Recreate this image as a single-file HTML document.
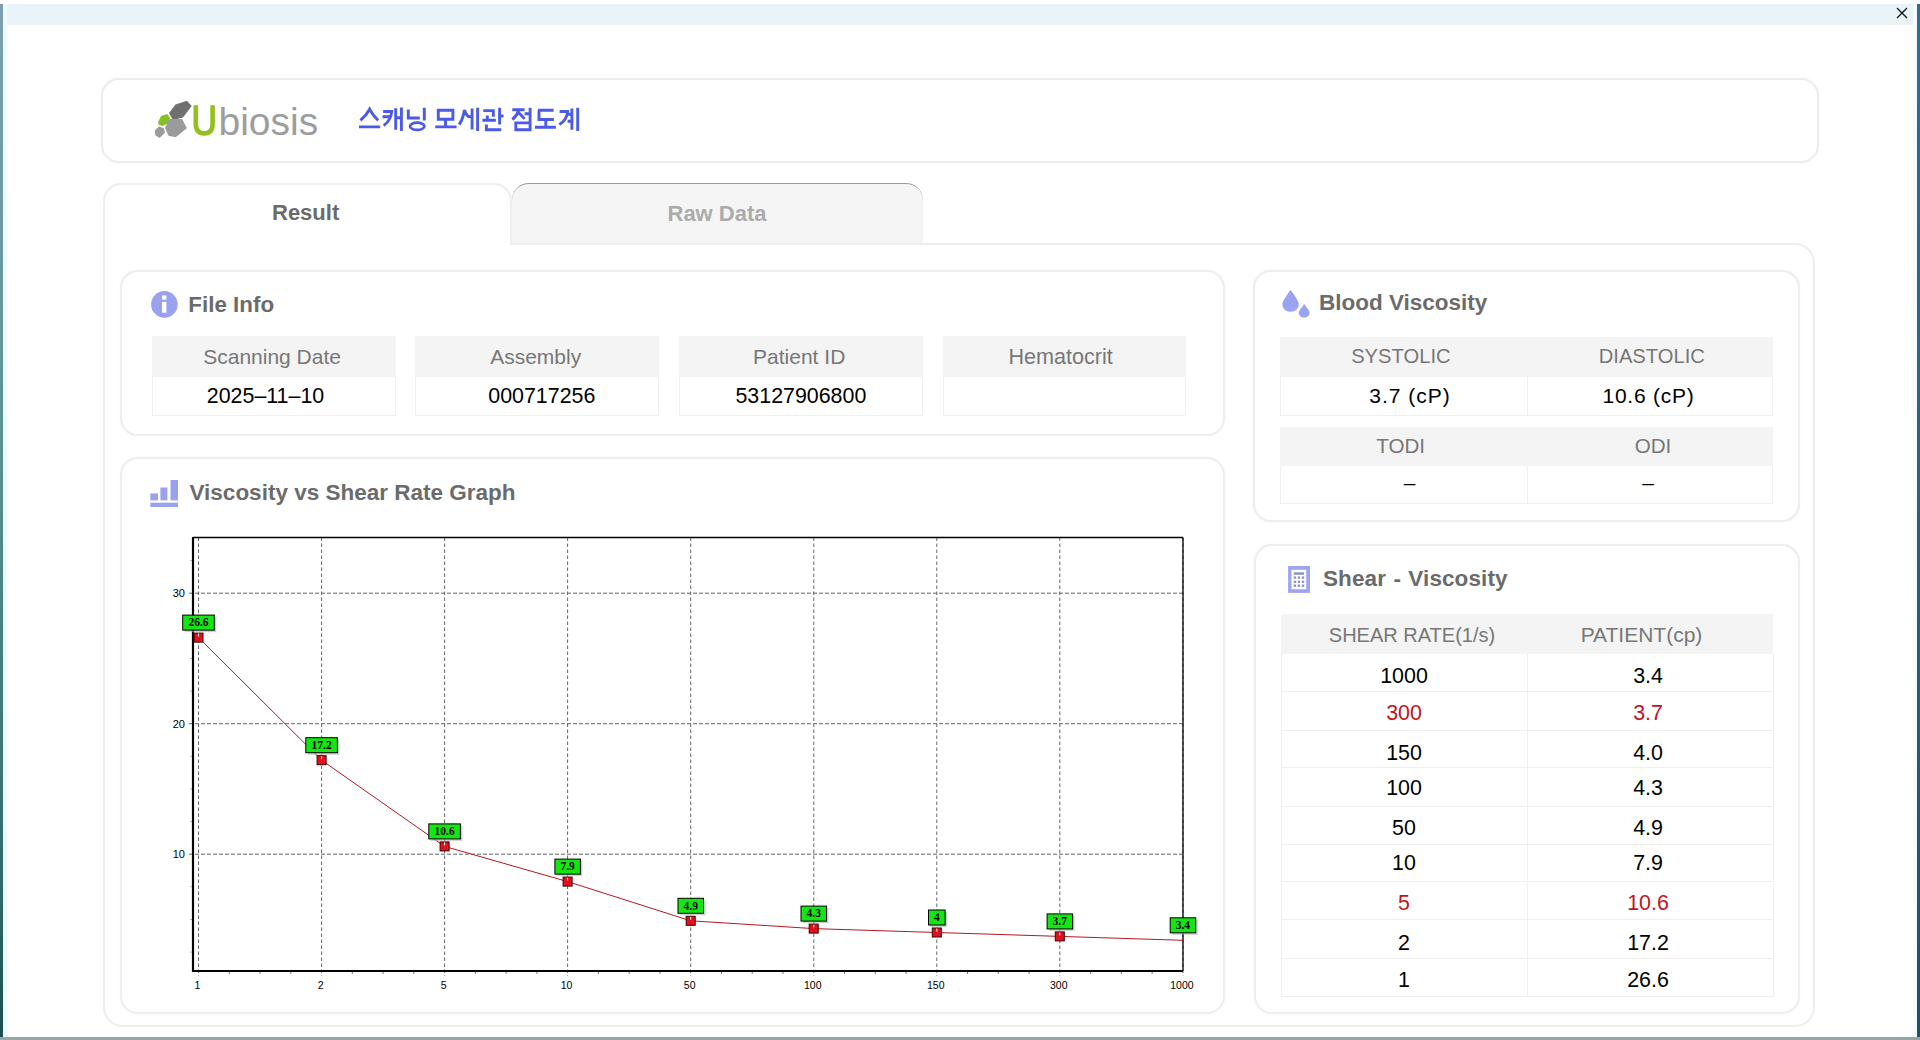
<!DOCTYPE html>
<html><head><meta charset="utf-8">
<style>
html,body{margin:0;padding:0;}
body{width:1920px;height:1040px;overflow:hidden;position:relative;background:#fff;font-family:"Liberation Sans",sans-serif;}
.t{position:absolute;white-space:nowrap;}
.r{position:absolute;box-sizing:border-box;}
svg{position:absolute;}
</style></head><body>

<div class="r" style="left:0.0px;top:4.0px;width:3.0px;height:1033.0px;background:linear-gradient(#7d9fb5,#5e9396 40%,#2f6b6b 85%,#1d4f52);"></div>
<div class="r" style="left:3.0px;top:4.0px;width:4.0px;height:1033.0px;background:#eefbfc;"></div>
<div class="r" style="left:1917.0px;top:4.0px;width:3.0px;height:1033.0px;background:linear-gradient(#2c6f93,#2b5f86 50%,#1d4f6f);"></div>
<div class="r" style="left:1913.0px;top:4.0px;width:4.0px;height:1033.0px;background:#f6fbfd;"></div>
<div class="r" style="left:0.0px;top:1037.0px;width:1920.0px;height:3.0px;background:#93a6a8;"></div>
<div class="r" style="left:7.0px;top:4.0px;width:1906.0px;height:21.0px;background:linear-gradient(#e6f4fa,#ecf3f8);"></div>
<svg style="left:1894px;top:5px" width="16" height="16" viewBox="0 0 16 16"><path d="M3 3 L13 13 M13 3 L3 13" stroke="#111" stroke-width="1.3" fill="none"/></svg>
<div class="r" style="left:101.0px;top:78.0px;width:1717.5px;height:84.5px;border:2px solid #ededed;border-radius:18px;background:#fff;box-shadow:0 0 3px rgba(0,0,0,0.04);"></div>
<svg style="left:0;top:0" width="340" height="160" viewBox="0 0 340 160">
<polygon points="169.0,113.1 175.5,104.5 186.9,100.7 191.7,106.0 183.0,117.4 172.9,120.0" fill="#707070"/>
<polygon points="158.1,122.1 161.2,116.1 167.2,114.0 169.9,117.8 168.3,123.2 162.4,125.9 158.6,124.8" fill="#82c11e"/>
<polygon points="164.9,127.7 169.7,119.1 182.1,119.1 186.9,128.2 175.6,137.3 168.5,135.7" fill="#9b9b9b"/>
<polygon points="154.8,130.4 159.0,126.6 164.0,128.3 165.0,132.6 159.6,138.0 155.3,135.3" fill="#9b9b9b"/>
<path d="M195.8,105.3 V124 Q195.8,133.4 204.2,133.4 Q212.6,133.4 212.6,124 V105.3" stroke="#93c01f" stroke-width="4.6" fill="none"/>
</svg>
<div class="t" style="left:218.5px;top:102.0px;font-size:39px;line-height:39px;color:#9d9d9d;font-weight:normal;font-family:'Liberation Sans', sans-serif;">biosis</div>
<svg style="left:0;top:0" width="600" height="140" viewBox="0 0 600 140"><path d="M360.4,120.3 Q366,116 369.6,109.2 Q373,116 378.2,120.3 M359,126.9 H380.2 M383.1,111.5 H391.7 Q391,120 383.7,125.6 M382.5,116.8 H391.1 M395.7,108.3 V129.8 M395.7,117.8 H401.4 M401.4,107.4 V131 M408.3,109.5 V118 H419.8 M424.3,107.7 V120.6 M438.3,110.3 H452.9 V119.2 H438.3 Z M445.5,119.2 V126.9 M435.2,126.9 H456.6 M459.2,124.6 Q463.5,118 464.4,110 Q466,115 469,117.4 M467.8,116.6 H472.1 M472.1,108.6 V129.5 M477.6,107.7 V131 M483.3,110.6 H493.3 V116.8 M487.3,115.5 V120 M482.4,120.3 H495.9 M499.6,107.7 V124.6 M499.6,116 H503.6 M486.4,124.4 V129.8 H501.3 M512.3,109.8 H524.6 M518.9,110 Q517,116 512.3,119.5 M519,113 Q522,116 524.6,118.9 M524.6,113.8 H529.8 M530.1,107.7 V122.6 M515.8,122.9 H530.1 V129.8 H515.8 Z M538.1,110.3 H553.6 M539,110.3 V119.5 H553.9 M545.8,119.5 V126.9 M535,127.2 H555.9 M559.6,111.5 H567.6 Q567,120 559.3,124.6 M567.6,114.3 H571.9 M567.6,121.2 H571.9 M571.9,108.6 V129.8 M577.7,107.7 V131" stroke="#4b5be8" stroke-width="2.9" fill="none" stroke-linejoin="miter"/><ellipse cx="417.2" cy="126.3" rx="7.2" ry="3.6" stroke="#4b5be8" stroke-width="2.7" fill="none"/></svg>
<div class="r" style="left:103.0px;top:243.0px;width:1712.0px;height:784.0px;border:2px solid #eeeeee;border-radius:0 20px 20px 20px;background:#fff;"></div>
<div class="r" style="left:103.0px;top:182.5px;width:409.0px;height:62.5px;border:2px solid #eeeeee;border-bottom:none;border-radius:18px 18px 0 0;background:#fff;"></div>
<div class="r" style="left:511.5px;top:182.8px;width:411.0px;height:60.7px;border-top:1px solid #9a9a9a;border-radius:17px 17px 0 0;background:#f5f5f5;"></div>
<div class="t" style="left:272.0px;top:201.8px;font-size:22px;line-height:22px;color:#6b6b6b;font-weight:bold;font-family:'Liberation Sans', sans-serif;">Result</div>
<div class="t" style="left:667.5px;top:202.8px;font-size:22px;line-height:22px;color:#ababab;font-weight:bold;font-family:'Liberation Sans', sans-serif;">Raw Data</div>
<div class="r" style="left:119.5px;top:270.0px;width:1105.0px;height:165.5px;border:2px solid #eeeeee;border-radius:18px;background:#fff;box-shadow:0 0 3px rgba(0,0,0,0.04);"></div>
<svg style="left:150px;top:290px" width="30" height="30" viewBox="0 0 30 30">
<circle cx="14.4" cy="14.4" r="13.3" fill="#9aa2f0"/>
<rect x="12" y="5.4" width="4.4" height="4.2" fill="#fff"/>
<rect x="12" y="11.9" width="4.4" height="10.8" fill="#fff"/>
</svg>
<div class="t" style="left:188.3px;top:293.9px;font-size:22.4px;line-height:22.4px;color:#6b6b6b;font-weight:bold;font-family:'Liberation Sans', sans-serif;">File Info</div>
<div class="r" style="left:151.5px;top:336.2px;width:244.3px;height:41.2px;background:#f4f4f4;"></div>
<div class="r" style="left:151.5px;top:377.4px;width:244.3px;height:39.1px;border:1px solid #f0f0f0;border-top:none;background:#fff;"></div>
<div class="t" style="left:122.1px;width:300px;text-align:center;top:346.2px;font-size:21px;line-height:21px;color:#777;font-weight:normal;font-family:'Liberation Sans', sans-serif;">Scanning Date</div>
<div class="t" style="left:115.5px;width:300px;text-align:center;top:385.7px;font-size:21.4px;line-height:21.4px;color:#000;font-weight:normal;font-family:'Liberation Sans', sans-serif;">2025&ndash;11&ndash;10</div>
<div class="r" style="left:415.2px;top:336.2px;width:244.0px;height:41.2px;background:#f4f4f4;"></div>
<div class="r" style="left:415.2px;top:377.4px;width:244.0px;height:39.1px;border:1px solid #f0f0f0;border-top:none;background:#fff;"></div>
<div class="t" style="left:385.7px;width:300px;text-align:center;top:346.2px;font-size:21px;line-height:21px;color:#777;font-weight:normal;font-family:'Liberation Sans', sans-serif;">Assembly</div>
<div class="t" style="left:391.8px;width:300px;text-align:center;top:385.7px;font-size:21.4px;line-height:21.4px;color:#000;font-weight:normal;font-family:'Liberation Sans', sans-serif;">000717256</div>
<div class="r" style="left:678.7px;top:336.2px;width:244.1px;height:41.2px;background:#f4f4f4;"></div>
<div class="r" style="left:678.7px;top:377.4px;width:244.1px;height:39.1px;border:1px solid #f0f0f0;border-top:none;background:#fff;"></div>
<div class="t" style="left:649.2px;width:300px;text-align:center;top:346.2px;font-size:21px;line-height:21px;color:#777;font-weight:normal;font-family:'Liberation Sans', sans-serif;">Patient ID</div>
<div class="t" style="left:650.9px;width:300px;text-align:center;top:385.7px;font-size:21.4px;line-height:21.4px;color:#000;font-weight:normal;font-family:'Liberation Sans', sans-serif;">53127906800</div>
<div class="r" style="left:942.5px;top:336.2px;width:243.2px;height:41.2px;background:#f4f4f4;"></div>
<div class="r" style="left:942.5px;top:377.4px;width:243.2px;height:39.1px;border:1px solid #f0f0f0;border-top:none;background:#fff;"></div>
<div class="t" style="left:910.6px;width:300px;text-align:center;top:345.7px;font-size:21.6px;line-height:21.6px;color:#777;font-weight:normal;font-family:'Liberation Sans', sans-serif;">Hematocrit</div>
<div class="r" style="left:119.5px;top:457.0px;width:1105.0px;height:557.0px;border:2px solid #eeeeee;border-radius:18px;background:#fff;box-shadow:0 0 3px rgba(0,0,0,0.04);"></div>
<svg style="left:148px;top:478px" width="34" height="32" viewBox="0 0 34 32">
<rect x="2.3" y="15.4" width="7.7" height="7" fill="#9aa2f0"/>
<rect x="12.4" y="9.5" width="7" height="12.9" fill="#9aa2f0"/>
<rect x="22.5" y="2" width="7.5" height="20.4" fill="#9aa2f0"/>
<rect x="2.3" y="24.7" width="27.7" height="4.3" fill="#9aa2f0"/>
</svg>
<div class="t" style="left:189.5px;top:482.1px;font-size:22.5px;line-height:22.5px;color:#6b6b6b;font-weight:bold;font-family:'Liberation Sans', sans-serif;">Viscosity vs Shear Rate Graph</div>
<svg style="left:0;top:0" width="1920" height="1040" viewBox="0 0 1920 1040">
<line x1="198.5" y1="537.5" x2="198.5" y2="976" stroke="#666" stroke-width="1" stroke-dasharray="3.5,2.5"/>
<line x1="321.6" y1="537.5" x2="321.6" y2="976" stroke="#666" stroke-width="1" stroke-dasharray="3.5,2.5"/>
<line x1="444.6" y1="537.5" x2="444.6" y2="976" stroke="#666" stroke-width="1" stroke-dasharray="3.5,2.5"/>
<line x1="567.6" y1="537.5" x2="567.6" y2="976" stroke="#666" stroke-width="1" stroke-dasharray="3.5,2.5"/>
<line x1="690.7" y1="537.5" x2="690.7" y2="976" stroke="#666" stroke-width="1" stroke-dasharray="3.5,2.5"/>
<line x1="813.8" y1="537.5" x2="813.8" y2="976" stroke="#666" stroke-width="1" stroke-dasharray="3.5,2.5"/>
<line x1="936.8" y1="537.5" x2="936.8" y2="976" stroke="#666" stroke-width="1" stroke-dasharray="3.5,2.5"/>
<line x1="1059.8" y1="537.5" x2="1059.8" y2="976" stroke="#666" stroke-width="1" stroke-dasharray="3.5,2.5"/>
<line x1="1182.9" y1="537.5" x2="1182.9" y2="976" stroke="#666" stroke-width="1" stroke-dasharray="3.5,2.5"/>
<line x1="189" y1="854.2" x2="1183" y2="854.2" stroke="#666" stroke-width="1" stroke-dasharray="4,2"/>
<text x="185" y="858.2" font-family="Liberation Sans" font-size="11" text-anchor="end" fill="#000">10</text>
<line x1="189" y1="723.7" x2="1183" y2="723.7" stroke="#666" stroke-width="1" stroke-dasharray="4,2"/>
<text x="185" y="727.7" font-family="Liberation Sans" font-size="11" text-anchor="end" fill="#000">20</text>
<line x1="189" y1="593.2" x2="1183" y2="593.2" stroke="#666" stroke-width="1" stroke-dasharray="4,2"/>
<text x="185" y="597.2" font-family="Liberation Sans" font-size="11" text-anchor="end" fill="#000">30</text>
<line x1="190" y1="952.1" x2="193" y2="952.1" stroke="#bbb" stroke-width="1"/>
<line x1="190" y1="919.5" x2="193" y2="919.5" stroke="#bbb" stroke-width="1"/>
<line x1="190" y1="886.8" x2="193" y2="886.8" stroke="#bbb" stroke-width="1"/>
<line x1="190" y1="821.6" x2="193" y2="821.6" stroke="#bbb" stroke-width="1"/>
<line x1="190" y1="789.0" x2="193" y2="789.0" stroke="#bbb" stroke-width="1"/>
<line x1="190" y1="756.3" x2="193" y2="756.3" stroke="#bbb" stroke-width="1"/>
<line x1="190" y1="691.1" x2="193" y2="691.1" stroke="#bbb" stroke-width="1"/>
<line x1="190" y1="658.5" x2="193" y2="658.5" stroke="#bbb" stroke-width="1"/>
<line x1="190" y1="625.8" x2="193" y2="625.8" stroke="#bbb" stroke-width="1"/>
<line x1="190" y1="560.6" x2="193" y2="560.6" stroke="#bbb" stroke-width="1"/>
<line x1="229.3" y1="971" x2="229.3" y2="974" stroke="#777" stroke-width="1"/>
<line x1="260.0" y1="971" x2="260.0" y2="974" stroke="#777" stroke-width="1"/>
<line x1="290.8" y1="971" x2="290.8" y2="974" stroke="#777" stroke-width="1"/>
<line x1="352.3" y1="971" x2="352.3" y2="974" stroke="#777" stroke-width="1"/>
<line x1="383.1" y1="971" x2="383.1" y2="974" stroke="#777" stroke-width="1"/>
<line x1="413.8" y1="971" x2="413.8" y2="974" stroke="#777" stroke-width="1"/>
<line x1="475.4" y1="971" x2="475.4" y2="974" stroke="#777" stroke-width="1"/>
<line x1="506.1" y1="971" x2="506.1" y2="974" stroke="#777" stroke-width="1"/>
<line x1="536.9" y1="971" x2="536.9" y2="974" stroke="#777" stroke-width="1"/>
<line x1="598.4" y1="971" x2="598.4" y2="974" stroke="#777" stroke-width="1"/>
<line x1="629.2" y1="971" x2="629.2" y2="974" stroke="#777" stroke-width="1"/>
<line x1="659.9" y1="971" x2="659.9" y2="974" stroke="#777" stroke-width="1"/>
<line x1="721.5" y1="971" x2="721.5" y2="974" stroke="#777" stroke-width="1"/>
<line x1="752.2" y1="971" x2="752.2" y2="974" stroke="#777" stroke-width="1"/>
<line x1="783.0" y1="971" x2="783.0" y2="974" stroke="#777" stroke-width="1"/>
<line x1="844.5" y1="971" x2="844.5" y2="974" stroke="#777" stroke-width="1"/>
<line x1="875.3" y1="971" x2="875.3" y2="974" stroke="#777" stroke-width="1"/>
<line x1="906.0" y1="971" x2="906.0" y2="974" stroke="#777" stroke-width="1"/>
<line x1="967.6" y1="971" x2="967.6" y2="974" stroke="#777" stroke-width="1"/>
<line x1="998.3" y1="971" x2="998.3" y2="974" stroke="#777" stroke-width="1"/>
<line x1="1029.1" y1="971" x2="1029.1" y2="974" stroke="#777" stroke-width="1"/>
<line x1="1090.6" y1="971" x2="1090.6" y2="974" stroke="#777" stroke-width="1"/>
<line x1="1121.4" y1="971" x2="1121.4" y2="974" stroke="#777" stroke-width="1"/>
<line x1="1152.1" y1="971" x2="1152.1" y2="974" stroke="#777" stroke-width="1"/>
<line x1="193" y1="537.5" x2="1183" y2="537.5" stroke="#000" stroke-width="1.3"/>
<line x1="1183" y1="537.5" x2="1183" y2="971" stroke="#000" stroke-width="1.3"/>
<line x1="193" y1="537.0" x2="193" y2="972" stroke="#000" stroke-width="2.2"/>
<line x1="193" y1="971" x2="1183" y2="971" stroke="#000" stroke-width="2.2"/>
<text x="197.5" y="988.7" font-family="Liberation Sans" font-size="10.5" text-anchor="middle" fill="#000">1</text>
<text x="320.6" y="988.7" font-family="Liberation Sans" font-size="10.5" text-anchor="middle" fill="#000">2</text>
<text x="443.6" y="988.7" font-family="Liberation Sans" font-size="10.5" text-anchor="middle" fill="#000">5</text>
<text x="566.6" y="988.7" font-family="Liberation Sans" font-size="10.5" text-anchor="middle" fill="#000">10</text>
<text x="689.7" y="988.7" font-family="Liberation Sans" font-size="10.5" text-anchor="middle" fill="#000">50</text>
<text x="812.8" y="988.7" font-family="Liberation Sans" font-size="10.5" text-anchor="middle" fill="#000">100</text>
<text x="935.8" y="988.7" font-family="Liberation Sans" font-size="10.5" text-anchor="middle" fill="#000">150</text>
<text x="1058.8" y="988.7" font-family="Liberation Sans" font-size="10.5" text-anchor="middle" fill="#000">300</text>
<text x="1181.9" y="988.7" font-family="Liberation Sans" font-size="10.5" text-anchor="middle" fill="#000">1000</text>
<polyline points="198.5,637.6 321.6,760.2 444.6,846.4 567.6,881.6 690.7,920.8 813.8,928.6 936.8,932.5 1059.8,936.4 1182.9,940.3" fill="none" stroke="#b01a22" stroke-width="1"/>
<rect x="194.0" y="633.1" width="9" height="9" fill="#e0101c" stroke="#400000" stroke-width="1"/>
<line x1="198.5" y1="633.6" x2="198.5" y2="636.6" stroke="#fff" stroke-width="1"/>
<rect x="184.7" y="617.1" width="31.6" height="15" fill="#b0b0b0" opacity="0.6"/>
<rect x="182.7" y="615.1" width="31.6" height="15" fill="#14e614" stroke="#000" stroke-width="1"/>
<text x="198.5" y="626.3" font-family="Liberation Serif" font-weight="bold" font-size="11.5" text-anchor="middle" fill="#000">26.6</text>
<rect x="317.1" y="755.7" width="9" height="9" fill="#e0101c" stroke="#400000" stroke-width="1"/>
<line x1="321.6" y1="756.2" x2="321.6" y2="759.2" stroke="#fff" stroke-width="1"/>
<rect x="307.8" y="739.7" width="31.6" height="15" fill="#b0b0b0" opacity="0.6"/>
<rect x="305.8" y="737.7" width="31.6" height="15" fill="#14e614" stroke="#000" stroke-width="1"/>
<text x="321.6" y="748.9" font-family="Liberation Serif" font-weight="bold" font-size="11.5" text-anchor="middle" fill="#000">17.2</text>
<rect x="440.1" y="841.9" width="9" height="9" fill="#e0101c" stroke="#400000" stroke-width="1"/>
<line x1="444.6" y1="842.4" x2="444.6" y2="845.4" stroke="#fff" stroke-width="1"/>
<rect x="430.8" y="825.9" width="31.6" height="15" fill="#b0b0b0" opacity="0.6"/>
<rect x="428.8" y="823.9" width="31.6" height="15" fill="#14e614" stroke="#000" stroke-width="1"/>
<text x="444.6" y="835.1" font-family="Liberation Serif" font-weight="bold" font-size="11.5" text-anchor="middle" fill="#000">10.6</text>
<rect x="563.1" y="877.1" width="9" height="9" fill="#e0101c" stroke="#400000" stroke-width="1"/>
<line x1="567.6" y1="877.6" x2="567.6" y2="880.6" stroke="#fff" stroke-width="1"/>
<rect x="556.9" y="861.1" width="25.5" height="15" fill="#b0b0b0" opacity="0.6"/>
<rect x="554.9" y="859.1" width="25.5" height="15" fill="#14e614" stroke="#000" stroke-width="1"/>
<text x="567.6" y="870.3" font-family="Liberation Serif" font-weight="bold" font-size="11.5" text-anchor="middle" fill="#000">7.9</text>
<rect x="686.2" y="916.3" width="9" height="9" fill="#e0101c" stroke="#400000" stroke-width="1"/>
<line x1="690.7" y1="916.8" x2="690.7" y2="919.8" stroke="#fff" stroke-width="1"/>
<rect x="680.0" y="900.3" width="25.5" height="15" fill="#b0b0b0" opacity="0.6"/>
<rect x="678.0" y="898.3" width="25.5" height="15" fill="#14e614" stroke="#000" stroke-width="1"/>
<text x="690.7" y="909.5" font-family="Liberation Serif" font-weight="bold" font-size="11.5" text-anchor="middle" fill="#000">4.9</text>
<rect x="809.2" y="924.1" width="9" height="9" fill="#e0101c" stroke="#400000" stroke-width="1"/>
<line x1="813.8" y1="924.6" x2="813.8" y2="927.6" stroke="#fff" stroke-width="1"/>
<rect x="803.0" y="908.1" width="25.5" height="15" fill="#b0b0b0" opacity="0.6"/>
<rect x="801.0" y="906.1" width="25.5" height="15" fill="#14e614" stroke="#000" stroke-width="1"/>
<text x="813.8" y="917.3" font-family="Liberation Serif" font-weight="bold" font-size="11.5" text-anchor="middle" fill="#000">4.3</text>
<rect x="932.3" y="928.0" width="9" height="9" fill="#e0101c" stroke="#400000" stroke-width="1"/>
<line x1="936.8" y1="928.5" x2="936.8" y2="931.5" stroke="#fff" stroke-width="1"/>
<rect x="930.5" y="912.0" width="16.6" height="15" fill="#b0b0b0" opacity="0.6"/>
<rect x="928.5" y="910.0" width="16.6" height="15" fill="#14e614" stroke="#000" stroke-width="1"/>
<text x="936.8" y="921.2" font-family="Liberation Serif" font-weight="bold" font-size="11.5" text-anchor="middle" fill="#000">4</text>
<rect x="1055.3" y="931.9" width="9" height="9" fill="#e0101c" stroke="#400000" stroke-width="1"/>
<line x1="1059.8" y1="932.4" x2="1059.8" y2="935.4" stroke="#fff" stroke-width="1"/>
<rect x="1049.1" y="915.9" width="25.5" height="15" fill="#b0b0b0" opacity="0.6"/>
<rect x="1047.1" y="913.9" width="25.5" height="15" fill="#14e614" stroke="#000" stroke-width="1"/>
<text x="1059.8" y="925.1" font-family="Liberation Serif" font-weight="bold" font-size="11.5" text-anchor="middle" fill="#000">3.7</text>
<rect x="1172.2" y="919.8" width="25.5" height="15" fill="#b0b0b0" opacity="0.6"/>
<rect x="1170.2" y="917.8" width="25.5" height="15" fill="#14e614" stroke="#000" stroke-width="1"/>
<text x="1182.9" y="929.0" font-family="Liberation Serif" font-weight="bold" font-size="11.5" text-anchor="middle" fill="#000">3.4</text>
</svg>
<div class="r" style="left:1253.0px;top:269.5px;width:546.5px;height:252.0px;border:2px solid #eeeeee;border-radius:18px;background:#fff;box-shadow:0 0 3px rgba(0,0,0,0.04);"></div>
<svg style="left:1278px;top:286px" width="36" height="36" viewBox="0 0 36 36">
<path d="M12.6,3.7 C9.5,8.5 4.4,14.5 4.4,18.3 C4.4,22.8 8,25.8 12.6,25.8 C17.2,25.8 20.8,22.8 20.8,18.3 C20.8,14.5 15.7,8.5 12.6,3.7 Z" fill="#9aa2f2"/>
<path d="M26.2,18 C24.5,20.8 20.8,24.6 20.8,26.6 C20.8,29.6 23.2,31.6 26.2,31.6 C29.2,31.6 31.6,29.6 31.6,26.6 C31.6,24.6 27.9,20.8 26.2,18 Z" fill="#9aa2f2"/>
</svg>
<div class="t" style="left:1319.0px;top:292.2px;font-size:22.5px;line-height:22.5px;color:#6b6b6b;font-weight:bold;font-family:'Liberation Sans', sans-serif;">Blood Viscosity</div>
<div class="r" style="left:1279.7px;top:336.9px;width:493.3px;height:40.0px;background:#f4f4f4;"></div>
<div class="r" style="left:1279.7px;top:376.9px;width:247.3px;height:39.1px;border-left:1px solid #f0f0f0;border-bottom:1px solid #f0f0f0;background:#fff;"></div>
<div class="r" style="left:1527.0px;top:376.9px;width:246.0px;height:39.1px;border:1px solid #f0f0f0;border-top:none;background:#fff;"></div>
<div class="t" style="left:1200.9px;width:400px;text-align:center;top:346.2px;font-size:20.2px;line-height:20.2px;color:#777;font-weight:normal;font-family:'Liberation Sans', sans-serif;">SYSTOLIC</div>
<div class="t" style="left:1451.8px;width:400px;text-align:center;top:346.2px;font-size:20.2px;line-height:20.2px;color:#777;font-weight:normal;font-family:'Liberation Sans', sans-serif;">DIASTOLIC</div>
<div class="t" style="left:1210.0px;width:400px;text-align:center;top:385.4px;font-size:21px;line-height:21px;color:#000;font-weight:normal;font-family:'Liberation Sans', sans-serif;letter-spacing:1px;">3.7 (cP)</div>
<div class="t" style="left:1448.5px;width:400px;text-align:center;top:385.4px;font-size:21px;line-height:21px;color:#000;font-weight:normal;font-family:'Liberation Sans', sans-serif;letter-spacing:0.75px;">10.6 (cP)</div>
<div class="r" style="left:1279.7px;top:427.3px;width:493.3px;height:39.1px;background:#f4f4f4;"></div>
<div class="r" style="left:1279.7px;top:466.4px;width:247.3px;height:38.1px;border-left:1px solid #f0f0f0;border-bottom:1px solid #f0f0f0;background:#fff;"></div>
<div class="r" style="left:1527.0px;top:466.4px;width:246.0px;height:38.1px;border:1px solid #f0f0f0;border-top:none;background:#fff;"></div>
<div class="t" style="left:1200.6px;width:400px;text-align:center;top:436.1px;font-size:20.6px;line-height:20.6px;color:#777;font-weight:normal;font-family:'Liberation Sans', sans-serif;">TODI</div>
<div class="t" style="left:1453.0px;width:400px;text-align:center;top:436.1px;font-size:20.6px;line-height:20.6px;color:#777;font-weight:normal;font-family:'Liberation Sans', sans-serif;">ODI</div>
<div class="t" style="left:1209.7px;width:400px;text-align:center;top:471.7px;font-size:21px;line-height:21px;color:#000;font-weight:normal;font-family:'Liberation Sans', sans-serif;">&ndash;</div>
<div class="t" style="left:1448.0px;width:400px;text-align:center;top:471.7px;font-size:21px;line-height:21px;color:#000;font-weight:normal;font-family:'Liberation Sans', sans-serif;">&ndash;</div>
<div class="r" style="left:1254.0px;top:543.5px;width:545.5px;height:470.0px;border:2px solid #eeeeee;border-radius:18px;background:#fff;box-shadow:0 0 3px rgba(0,0,0,0.04);"></div>
<svg style="left:1286px;top:564px" width="28" height="32" viewBox="0 0 28 32">
<rect x="2.1" y="2" width="21.9" height="26.9" fill="#9ea4f2"/>
<rect x="5.5" y="5.8" width="14.7" height="19.4" fill="#fff"/>
<rect x="7.8" y="8.3" width="10.2" height="2.5" fill="#8f94c8"/>
<g fill="#8f94c8">
<rect x="7.7" y="12.4" width="2.4" height="2.4"/><rect x="11.7" y="12.4" width="2.4" height="2.4"/><rect x="15.8" y="12.4" width="2.4" height="2.4"/>
<rect x="7.7" y="16.6" width="2.4" height="2.4"/><rect x="11.7" y="16.6" width="2.4" height="2.4"/><rect x="15.8" y="16.6" width="2.4" height="2.4"/>
<rect x="7.7" y="20.5" width="2.4" height="2.4"/><rect x="11.7" y="20.5" width="2.4" height="2.4"/><rect x="15.8" y="20.5" width="2.4" height="2.4"/>
</g></svg>
<div class="t" style="left:1323.0px;top:568.2px;font-size:22.5px;line-height:22.5px;color:#6b6b6b;font-weight:bold;font-family:'Liberation Sans', sans-serif;word-spacing:1px;letter-spacing:0.1px;">Shear - Viscosity</div>
<div class="r" style="left:1280.6px;top:614.4px;width:492.9px;height:39.3px;background:#f4f4f4;"></div>
<div class="t" style="left:1212.0px;width:400px;text-align:center;top:624.6px;font-size:20px;line-height:20px;color:#777;font-weight:normal;font-family:'Liberation Sans', sans-serif;">SHEAR RATE(1/s)</div>
<div class="t" style="left:1441.5px;width:400px;text-align:center;top:623.7px;font-size:21px;line-height:21px;color:#777;font-weight:normal;font-family:'Liberation Sans', sans-serif;">PATIENT(cp)</div>
<div class="r" style="left:1280.6px;top:653.7px;width:246.4px;height:38.5px;border-left:1px solid #f0f0f0;border-bottom:1px solid #efefef;background:#fff;"></div>
<div class="r" style="left:1527.0px;top:653.7px;width:246.5px;height:38.5px;border-left:1px solid #f0f0f0;border-right:1px solid #f0f0f0;border-bottom:1px solid #efefef;background:#fff;"></div>
<div class="t" style="left:1204.0px;width:400px;text-align:center;top:665.6px;font-size:21.4px;line-height:21.4px;color:#000;font-weight:normal;font-family:'Liberation Sans', sans-serif;">1000</div>
<div class="t" style="left:1448.0px;width:400px;text-align:center;top:665.6px;font-size:21.4px;line-height:21.4px;color:#000;font-weight:normal;font-family:'Liberation Sans', sans-serif;">3.4</div>
<div class="r" style="left:1280.6px;top:692.2px;width:246.4px;height:38.8px;border-left:1px solid #f0f0f0;border-bottom:1px solid #efefef;background:#fff;"></div>
<div class="r" style="left:1527.0px;top:692.2px;width:246.5px;height:38.8px;border-left:1px solid #f0f0f0;border-right:1px solid #f0f0f0;border-bottom:1px solid #efefef;background:#fff;"></div>
<div class="t" style="left:1204.0px;width:400px;text-align:center;top:702.6px;font-size:21.4px;line-height:21.4px;color:#c4121c;font-weight:normal;font-family:'Liberation Sans', sans-serif;">300</div>
<div class="t" style="left:1448.0px;width:400px;text-align:center;top:702.6px;font-size:21.4px;line-height:21.4px;color:#c4121c;font-weight:normal;font-family:'Liberation Sans', sans-serif;">3.7</div>
<div class="r" style="left:1280.6px;top:731.0px;width:246.4px;height:37.2px;border-left:1px solid #f0f0f0;border-bottom:1px solid #efefef;background:#fff;"></div>
<div class="r" style="left:1527.0px;top:731.0px;width:246.5px;height:37.2px;border-left:1px solid #f0f0f0;border-right:1px solid #f0f0f0;border-bottom:1px solid #efefef;background:#fff;"></div>
<div class="t" style="left:1204.0px;width:400px;text-align:center;top:742.6px;font-size:21.4px;line-height:21.4px;color:#000;font-weight:normal;font-family:'Liberation Sans', sans-serif;">150</div>
<div class="t" style="left:1448.0px;width:400px;text-align:center;top:742.6px;font-size:21.4px;line-height:21.4px;color:#000;font-weight:normal;font-family:'Liberation Sans', sans-serif;">4.0</div>
<div class="r" style="left:1280.6px;top:768.2px;width:246.4px;height:38.5px;border-left:1px solid #f0f0f0;border-bottom:1px solid #efefef;background:#fff;"></div>
<div class="r" style="left:1527.0px;top:768.2px;width:246.5px;height:38.5px;border-left:1px solid #f0f0f0;border-right:1px solid #f0f0f0;border-bottom:1px solid #efefef;background:#fff;"></div>
<div class="t" style="left:1204.0px;width:400px;text-align:center;top:777.6px;font-size:21.4px;line-height:21.4px;color:#000;font-weight:normal;font-family:'Liberation Sans', sans-serif;">100</div>
<div class="t" style="left:1448.0px;width:400px;text-align:center;top:777.6px;font-size:21.4px;line-height:21.4px;color:#000;font-weight:normal;font-family:'Liberation Sans', sans-serif;">4.3</div>
<div class="r" style="left:1280.6px;top:806.7px;width:246.4px;height:38.5px;border-left:1px solid #f0f0f0;border-bottom:1px solid #efefef;background:#fff;"></div>
<div class="r" style="left:1527.0px;top:806.7px;width:246.5px;height:38.5px;border-left:1px solid #f0f0f0;border-right:1px solid #f0f0f0;border-bottom:1px solid #efefef;background:#fff;"></div>
<div class="t" style="left:1204.0px;width:400px;text-align:center;top:817.6px;font-size:21.4px;line-height:21.4px;color:#000;font-weight:normal;font-family:'Liberation Sans', sans-serif;">50</div>
<div class="t" style="left:1448.0px;width:400px;text-align:center;top:817.6px;font-size:21.4px;line-height:21.4px;color:#000;font-weight:normal;font-family:'Liberation Sans', sans-serif;">4.9</div>
<div class="r" style="left:1280.6px;top:845.2px;width:246.4px;height:37.3px;border-left:1px solid #f0f0f0;border-bottom:1px solid #efefef;background:#fff;"></div>
<div class="r" style="left:1527.0px;top:845.2px;width:246.5px;height:37.3px;border-left:1px solid #f0f0f0;border-right:1px solid #f0f0f0;border-bottom:1px solid #efefef;background:#fff;"></div>
<div class="t" style="left:1204.0px;width:400px;text-align:center;top:852.6px;font-size:21.4px;line-height:21.4px;color:#000;font-weight:normal;font-family:'Liberation Sans', sans-serif;">10</div>
<div class="t" style="left:1448.0px;width:400px;text-align:center;top:852.6px;font-size:21.4px;line-height:21.4px;color:#000;font-weight:normal;font-family:'Liberation Sans', sans-serif;">7.9</div>
<div class="r" style="left:1280.6px;top:882.5px;width:246.4px;height:37.9px;border-left:1px solid #f0f0f0;border-bottom:1px solid #efefef;background:#fff;"></div>
<div class="r" style="left:1527.0px;top:882.5px;width:246.5px;height:37.9px;border-left:1px solid #f0f0f0;border-right:1px solid #f0f0f0;border-bottom:1px solid #efefef;background:#fff;"></div>
<div class="t" style="left:1204.0px;width:400px;text-align:center;top:892.6px;font-size:21.4px;line-height:21.4px;color:#c4121c;font-weight:normal;font-family:'Liberation Sans', sans-serif;">5</div>
<div class="t" style="left:1448.0px;width:400px;text-align:center;top:892.6px;font-size:21.4px;line-height:21.4px;color:#c4121c;font-weight:normal;font-family:'Liberation Sans', sans-serif;">10.6</div>
<div class="r" style="left:1280.6px;top:920.4px;width:246.4px;height:38.8px;border-left:1px solid #f0f0f0;border-bottom:1px solid #efefef;background:#fff;"></div>
<div class="r" style="left:1527.0px;top:920.4px;width:246.5px;height:38.8px;border-left:1px solid #f0f0f0;border-right:1px solid #f0f0f0;border-bottom:1px solid #efefef;background:#fff;"></div>
<div class="t" style="left:1204.0px;width:400px;text-align:center;top:932.6px;font-size:21.4px;line-height:21.4px;color:#000;font-weight:normal;font-family:'Liberation Sans', sans-serif;">2</div>
<div class="t" style="left:1448.0px;width:400px;text-align:center;top:932.6px;font-size:21.4px;line-height:21.4px;color:#000;font-weight:normal;font-family:'Liberation Sans', sans-serif;">17.2</div>
<div class="r" style="left:1280.6px;top:959.2px;width:246.4px;height:37.8px;border-left:1px solid #f0f0f0;border-bottom:1px solid #efefef;background:#fff;"></div>
<div class="r" style="left:1527.0px;top:959.2px;width:246.5px;height:37.8px;border-left:1px solid #f0f0f0;border-right:1px solid #f0f0f0;border-bottom:1px solid #efefef;background:#fff;"></div>
<div class="t" style="left:1204.0px;width:400px;text-align:center;top:969.6px;font-size:21.4px;line-height:21.4px;color:#000;font-weight:normal;font-family:'Liberation Sans', sans-serif;">1</div>
<div class="t" style="left:1448.0px;width:400px;text-align:center;top:969.6px;font-size:21.4px;line-height:21.4px;color:#000;font-weight:normal;font-family:'Liberation Sans', sans-serif;">26.6</div>
</body></html>
